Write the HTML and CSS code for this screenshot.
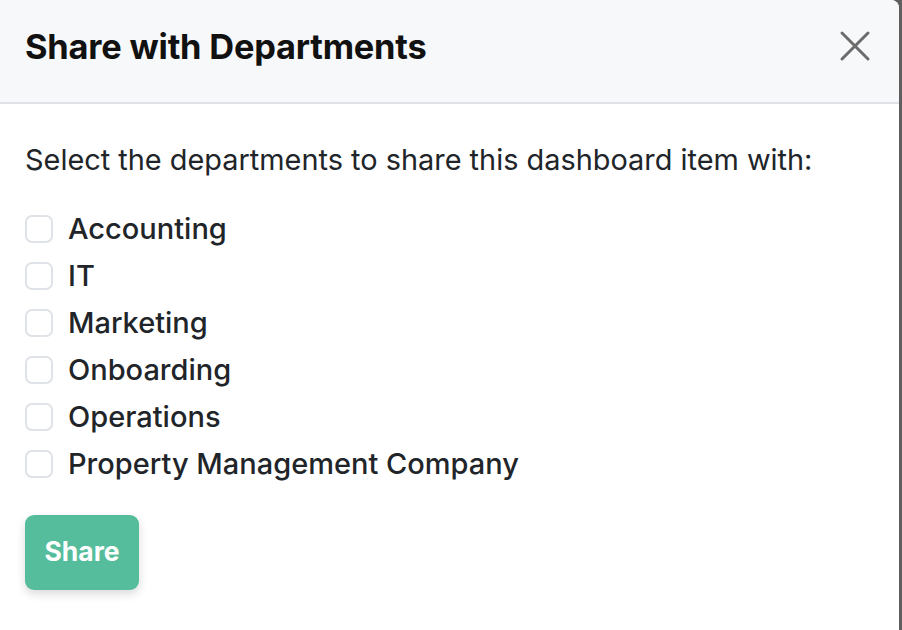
FILE: index.html
```html
<!DOCTYPE html>
<html lang="en">
<head>
<meta charset="utf-8">
<title>Share with Departments</title>
<link rel="stylesheet" href="styles.css">
</head>
<body>
<div class="modal">
  <div class="modal-header">
    <h2 class="modal-title">Share with Departments</h2>
    <button class="close" type="button" aria-label="Close">
      <svg width="32" height="32" viewBox="0 0 32 32"><path d="M3 3 L29 29 M29 3 L3 29" stroke="#6b6b6b" stroke-width="3" stroke-linecap="round" fill="none"/></svg>
    </button>
  </div>
  <div class="modal-body">
    <p class="intro">Select the departments to share this dashboard item with:</p>
    <ul class="dept-list">
      <li><label><span class="box"></span>Accounting</label></li>
      <li><label><span class="box"></span>IT</label></li>
      <li><label><span class="box"></span>Marketing</label></li>
      <li><label><span class="box"></span>Onboarding</label></li>
      <li><label><span class="box"></span>Operations</label></li>
      <li><label><span class="box"></span>Property Management Company</label></li>
    </ul>
    <button class="share-btn" type="button">Share</button>
  </div>
</div>
</body>
</html>
```

FILE: styles.css
```css
html, body {
  margin: 0;
  padding: 0;
  height: 100%;
}
body {
  background: #5f5f5f;
  font-family: Inter, "Noto Sans", sans-serif;
  color: #212529;
}
.modal {
  width: 899px;
  height: 630px;
  background: #ffffff;
  border-top-right-radius: 8px;
  overflow: hidden;
}
.modal-header {
  height: 104px;
  box-sizing: border-box;
  display: flex;
  align-items: center;
  justify-content: space-between;
  padding: 0 28px 10px 25px;
  background: #f7f8fa;
  border-bottom: 2px solid #dee2e6;
}
.modal-title {
  margin: 0;
  font-size: 34.4px;
  font-weight: 700;
  color: #111111;
  letter-spacing: -0.2px;
}
.close {
  border: 0;
  background: none;
  padding: 0;
  width: 32px;
  height: 32px;
  cursor: pointer;
}
.close svg { display: block; }
.modal-body {
  padding: 38px 25px 0 25px;
}
.intro {
  margin: 0 0 27px 0;
  font-size: 28.9px;
  font-weight: 400;
  line-height: 36px;
}
.dept-list {
  list-style: none;
  margin: 0;
  padding: 0;
}
.dept-list li {
  height: 47px;
  display: flex;
  align-items: center;
}
.dept-list label {
  display: flex;
  align-items: center;
  font-size: 29px;
  font-weight: 500;
}
.box {
  width: 28px;
  height: 28px;
  box-sizing: border-box;
  border: 2px solid #dfe2e6;
  border-radius: 7px;
  margin-right: 15px;
  background: #fff;
}
.share-btn {
  margin-top: 28px;
  width: 114px;
  height: 75px;
  border: 0;
  border-radius: 9px;
  background: #55bd9b;
  color: #ffffff;
  font-family: Inter, "Noto Sans", sans-serif;
  font-size: 26.5px;
  font-weight: 700;
  line-height: 1;
  padding: 0 0 3px 0;
  box-shadow: 0 4px 10px rgba(0,0,0,0.15);
}
```
